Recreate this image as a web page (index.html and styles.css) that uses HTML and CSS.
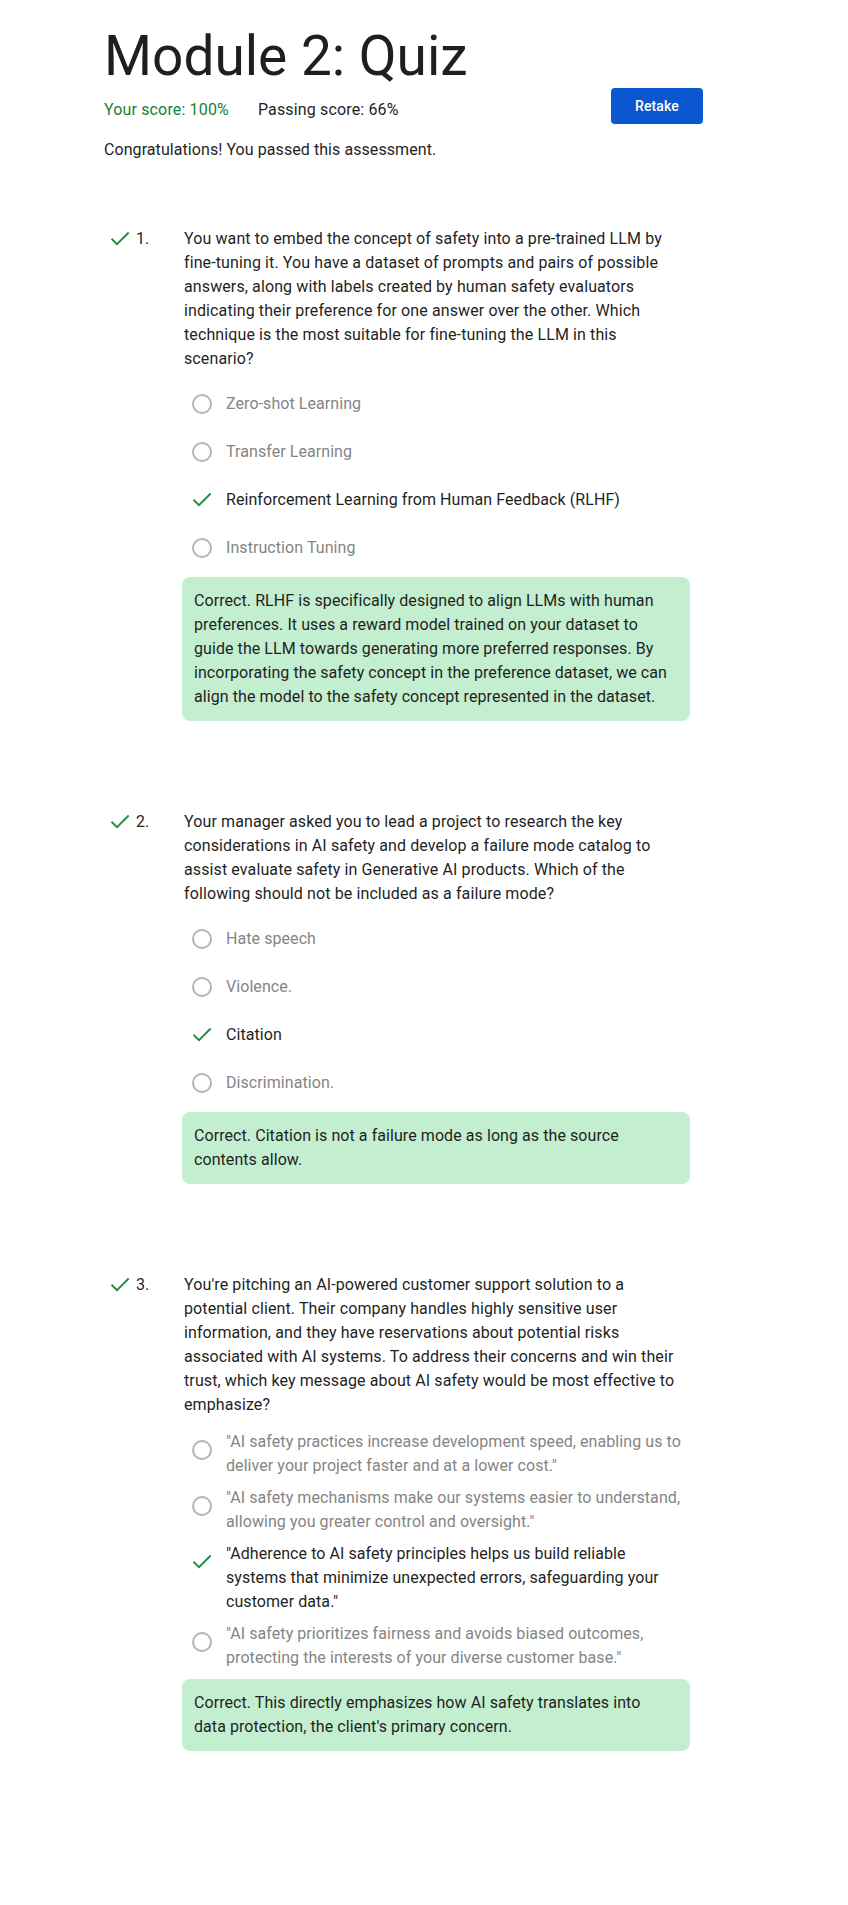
FILE: index.html
```html
<!DOCTYPE html>
<html lang="en">
<head>
<meta charset="utf-8">
<title>Module 2: Quiz</title>
<link rel="stylesheet" href="styles.css">
</head>
<body>
<main class="page">
  <h1 class="title">Module 2: Quiz</h1>
  <div class="score-row">
    <div class="scores">
      <span class="score-you">Your score: 100%</span>
      <span class="score-pass">Passing score: 66%</span>
    </div>
    <button class="retake" type="button">Retake</button>
  </div>
  <p class="congrats">Congratulations! You passed this assessment.</p>

  <ol class="questions">
    <li class="question">
      <div class="q-head">
        <svg class="q-check" viewBox="0 0 24 24" aria-hidden="true"><polyline points="4.2,12.4 9,17.2 20,6.2"/></svg>
        <span class="q-num">1.</span>
        <p class="q-text">You want to embed the concept of safety into a pre-trained LLM by<br>fine-tuning it. You have a dataset of prompts and pairs of possible<br>answers, along with labels created by human safety evaluators<br>indicating their preference for one answer over the other. Which<br>technique is the most suitable for fine-tuning the LLM in this<br>scenario?</p>
      </div>
      <div class="q-body">
        <ul class="options">
          <li class="option"><span class="opt-icon"><span class="radio"></span></span><span class="opt-text">Zero-shot Learning</span></li>
          <li class="option"><span class="opt-icon"><span class="radio"></span></span><span class="opt-text">Transfer Learning</span></li>
          <li class="option selected"><span class="opt-icon"><svg class="opt-check" viewBox="0 0 24 24" aria-hidden="true"><polyline points="4.2,12.4 9,17.2 20,6.2"/></svg></span><span class="opt-text">Reinforcement Learning from Human Feedback (RLHF)</span></li>
          <li class="option"><span class="opt-icon"><span class="radio"></span></span><span class="opt-text">Instruction Tuning</span></li>
        </ul>
        <div class="feedback">Correct. RLHF is specifically designed to align LLMs with human preferences. It uses a reward model trained on your dataset to guide the LLM towards generating more preferred responses. By incorporating the safety concept in the preference dataset, we can align the model to the safety concept represented in the dataset.</div>
      </div>
    </li>

    <li class="question">
      <div class="q-head">
        <svg class="q-check" viewBox="0 0 24 24" aria-hidden="true"><polyline points="4.2,12.4 9,17.2 20,6.2"/></svg>
        <span class="q-num">2.</span>
        <p class="q-text">Your manager asked you to lead a project to research the key<br>considerations in AI safety and develop a failure mode catalog to<br>assist evaluate safety in Generative AI products. Which of the<br>following should not be included as a failure mode?</p>
      </div>
      <div class="q-body">
        <ul class="options">
          <li class="option"><span class="opt-icon"><span class="radio"></span></span><span class="opt-text">Hate speech</span></li>
          <li class="option"><span class="opt-icon"><span class="radio"></span></span><span class="opt-text">Violence.</span></li>
          <li class="option selected"><span class="opt-icon"><svg class="opt-check" viewBox="0 0 24 24" aria-hidden="true"><polyline points="4.2,12.4 9,17.2 20,6.2"/></svg></span><span class="opt-text">Citation</span></li>
          <li class="option"><span class="opt-icon"><span class="radio"></span></span><span class="opt-text">Discrimination.</span></li>
        </ul>
        <div class="feedback">Correct. Citation is not a failure mode as long as the source contents allow.</div>
      </div>
    </li>

    <li class="question">
      <div class="q-head">
        <svg class="q-check" viewBox="0 0 24 24" aria-hidden="true"><polyline points="4.2,12.4 9,17.2 20,6.2"/></svg>
        <span class="q-num">3.</span>
        <p class="q-text">You're pitching an AI-powered customer support solution to a<br>potential client. Their company handles highly sensitive user<br>information, and they have reservations about potential risks<br>associated with AI systems. To address their concerns and win their<br>trust, which key message about AI safety would be most effective to<br>emphasize?</p>
      </div>
      <div class="q-body">
        <ul class="options">
          <li class="option"><span class="opt-icon"><span class="radio"></span></span><span class="opt-text">"AI safety practices increase development speed, enabling us to deliver your project faster and at a lower cost."</span></li>
          <li class="option"><span class="opt-icon"><span class="radio"></span></span><span class="opt-text">"AI safety mechanisms make our systems easier to understand, allowing you greater control and oversight."</span></li>
          <li class="option selected"><span class="opt-icon"><svg class="opt-check" viewBox="0 0 24 24" aria-hidden="true"><polyline points="4.2,12.4 9,17.2 20,6.2"/></svg></span><span class="opt-text">"Adherence to AI safety principles helps us build reliable<br>systems that minimize unexpected errors, safeguarding your<br>customer data."</span></li>
          <li class="option"><span class="opt-icon"><span class="radio"></span></span><span class="opt-text">"AI safety prioritizes fairness and avoids biased outcomes, protecting the interests of your diverse customer base."</span></li>
        </ul>
        <div class="feedback">Correct. This directly emphasizes how AI safety translates into<br>data protection, the client's primary concern.</div>
      </div>
    </li>
  </ol>
</main>
</body>
</html>
```

FILE: styles.css
```css
html, body {
  margin: 0;
  padding: 0;
  background: #ffffff;
}

body {
  font-family: Roboto, "Liberation Sans", Arial, sans-serif;
  font-size: 16px;
  line-height: 24px;
  letter-spacing: 0.07px;
  color: #1f1f1f;
}

.page {
  margin-left: 104px;
  width: 599px;
  padding-top: 24px;
  padding-bottom: 150px;
}

.title {
  margin: 0;
  font-size: 55px;
  line-height: 64px;
  font-weight: 400;
  color: #1f1f1f;
  letter-spacing: 0;
}

.score-row {
  display: flex;
  justify-content: space-between;
  align-items: flex-start;
  height: 36px;
}

.scores {
  display: flex;
  padding-top: 10px;
  letter-spacing: 0.15px;
}

.score-you {
  color: #188038;
  margin-right: 29px;
}

.score-pass {
  color: #1f1f1f;
}

.retake {
  width: 92px;
  height: 36px;
  border: none;
  border-radius: 4px;
  background: #0b57d0;
  color: #ffffff;
  font-family: Roboto, "Liberation Sans", Arial, sans-serif;
  font-size: 14px;
  font-weight: 500;
  letter-spacing: 0.1px;
  padding: 0;
}

.congrats {
  margin: 14px 0 0;
}

.questions {
  list-style: none;
  margin: 65px 0 0;
  padding: 0;
}

.question + .question {
  margin-top: 89px;
}

.q-head {
  display: flex;
  align-items: flex-start;
  width: 586px;
}

.q-check {
  flex: none;
  width: 24px;
  height: 24px;
  margin-left: 4px;
  margin-right: 4px;
}

.q-check polyline,
.opt-check polyline {
  fill: none;
  stroke: #1e8e3e;
  stroke-width: 1.9;
  stroke-linecap: square;
  stroke-linejoin: miter;
}

.q-num {
  flex: none;
  width: 48px;
}

.q-text {
  flex: 1;
  margin: 0;
  letter-spacing: 0.11px;
}

.q-body {
  margin-left: 78px;
  width: 508px;
  margin-top: 9px;
}

.options {
  list-style: none;
  margin: 0;
  padding: 0;
}

.option {
  display: flex;
  align-items: flex-start;
  min-height: 48px;
}

.opt-icon {
  flex: none;
  width: 40px;
  height: 48px;
  display: flex;
  align-items: center;
  justify-content: center;
}

.radio {
  width: 20px;
  height: 20px;
  box-sizing: border-box;
  border: 2px solid #b4b4b4;
  border-radius: 50%;
}

.opt-check {
  width: 24px;
  height: 24px;
}

.opt-text {
  flex: 1;
  box-sizing: border-box;
  min-height: 48px;
  margin-left: 4px;
  padding: 4px 0 4px 0;
  display: flex;
  align-items: center;
  color: #858585;
}

.option.selected .opt-text {
  color: #1f1f1f;
}

.feedback {
  margin-top: 5px;
  background: #c4eed0;
  border-radius: 8px;
  padding: 12px 12px 12px 12px;
  color: #1f1f1f;
}
```
